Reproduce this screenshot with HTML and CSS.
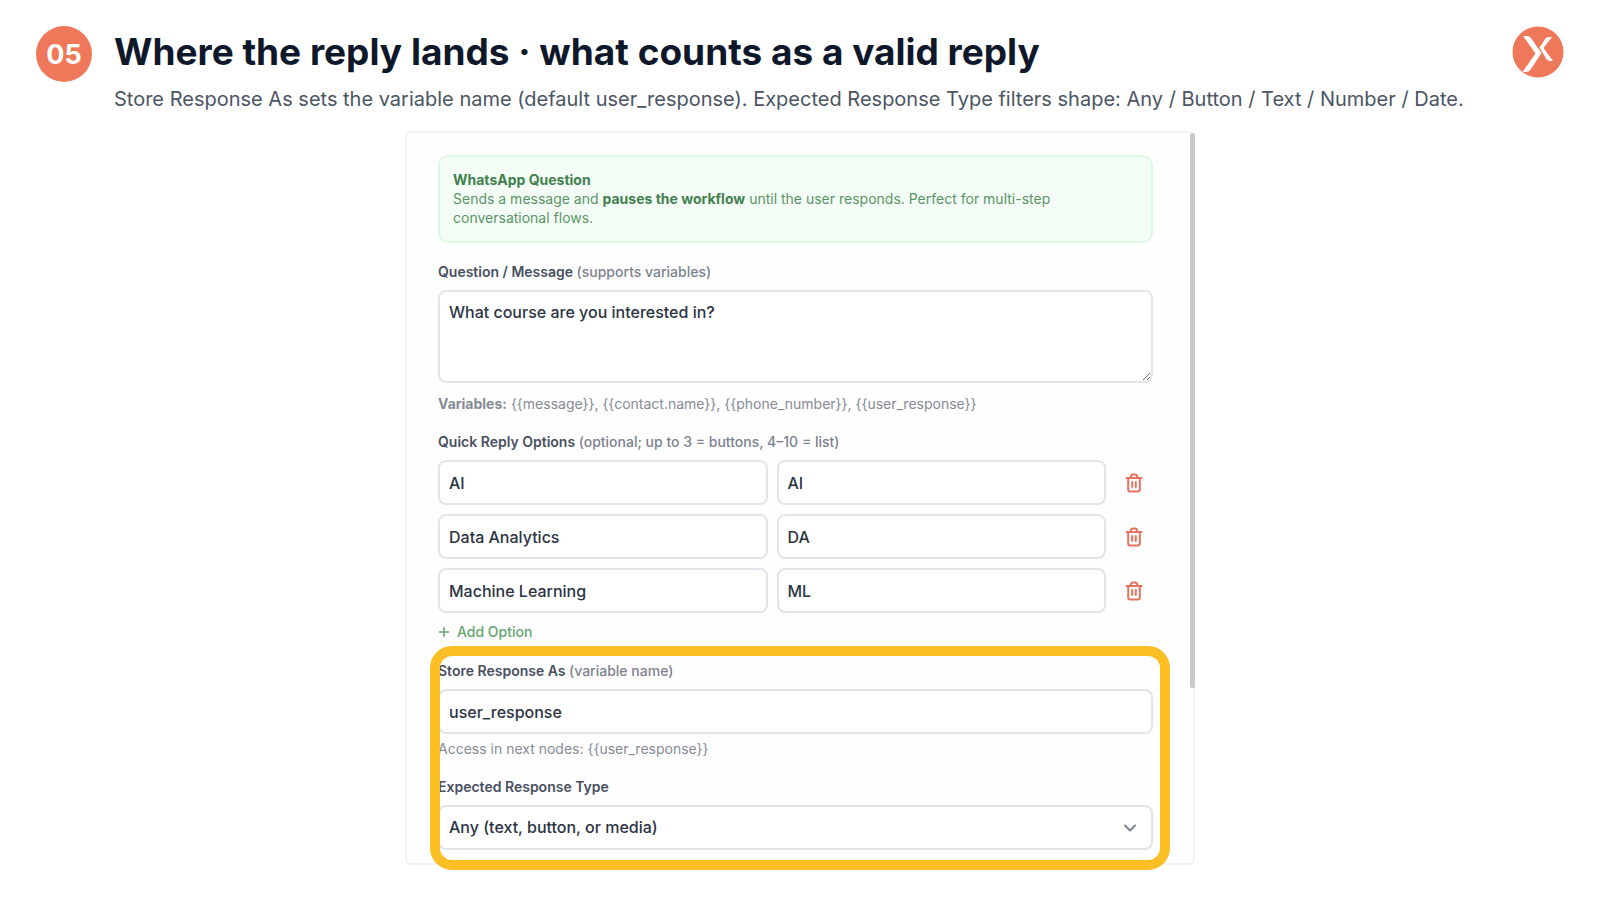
FILE: index.html
```
<!DOCTYPE html>
<html lang="en">
<head>
<meta charset="utf-8">
<title>Where the reply lands</title>
<link rel="stylesheet" href="styles.css">
</head>
<body>
<svg class="sprite" aria-hidden="true">
  <symbol id="trash" viewBox="0 0 18 20">
    <path d="M1.500 5h15M5.500 4.600C5.700 2.800 6.700 1.600 8.200 1.600h1.600c1.500 0 2.500 1.200 2.700 3M3.200 5.200v11.300c0 1.200.8 2 2 2h7.600c1.200 0 2-.8 2-2V5.200M7.200 9v5M10.800 9v5" fill="none" stroke="currentColor" stroke-width="2" stroke-linecap="round" stroke-linejoin="round"/>
  </symbol>
</svg>
<header class="header">
  <div class="step">05</div>
  <div class="heading">
    <h1 class="title">Where the reply lands · what counts as a valid reply</h1>
    <p class="subtitle">Store Response As sets the variable name (default user_response). Expected Response Type filters shape: Any / Button / Text / Number / Date.</p>
  </div>
  <svg class="logo" viewBox="0 0 52 52" role="img" aria-label="Logo">
    <circle cx="26" cy="26" r="25.500" fill="#f0785a"/>
    <path d="M11 10h4.500q2 0 3.200 1.800L29.500 27 19 43q-1.700 3-4.500 3H10.500L23.500 27.500Z" fill="#fff"/>
    <path d="M40 11h-3.500q-2 0-3.200 1.800L27.500 21.500 33.500 31.500q2 3.500 4.500 3.500H41L31.500 22Z" fill="#fff"/>
  </svg>
</header>
<main class="panel">
  <div class="scroll-thumb"></div>
  <form class="form">
    <div class="callout">
      <strong class="callout-title">WhatsApp Question</strong>
      <p class="callout-text">Sends a message and <strong>pauses the workflow</strong> until the user responds. Perfect for multi-step conversational flows.</p>
    </div>
    <div class="field">
      <label class="label" for="question">Question / Message <span class="note">(supports variables)</span></label>
      <textarea class="control area" id="question">What course are you interested in?</textarea>
      <p class="hint hint-area"><strong>Variables:</strong> {{message}}, {{contact.name}}, {{phone_number}}, {{user_response}}</p>
    </div>
    <fieldset class="field options">
      <legend class="label">Quick Reply Options <span class="note">(optional; up to 3 = buttons, 4–10 = list)</span></legend>
      <div class="option">
        <input class="control" type="text" value="AI" aria-label="Option 1 title">
        <input class="control" type="text" value="AI" aria-label="Option 1 value">
        <button class="remove" type="button" aria-label="Remove option 1"><svg class="trash"><use href="#trash"/></svg></button>
      </div>
      <div class="option">
        <input class="control" type="text" value="Data Analytics" aria-label="Option 2 title">
        <input class="control" type="text" value="DA" aria-label="Option 2 value">
        <button class="remove" type="button" aria-label="Remove option 2"><svg class="trash"><use href="#trash"/></svg></button>
      </div>
      <div class="option">
        <input class="control" type="text" value="Machine Learning" aria-label="Option 3 title">
        <input class="control" type="text" value="ML" aria-label="Option 3 value">
        <button class="remove" type="button" aria-label="Remove option 3"><svg class="trash"><use href="#trash"/></svg></button>
      </div>
      <button class="add" type="button"><svg class="plus" viewBox="0 0 12 12"><path d="M6 1.500v9M1.500 6h9" fill="none" stroke="currentColor" stroke-width="1.500" stroke-linecap="round"/></svg>Add Option</button>
    </fieldset>
    <section class="highlighted">
      <div class="field">
        <label class="label" for="variable">Store Response As <span class="note">(variable name)</span></label>
        <input class="control" id="variable" type="text" value="user_response">
        <p class="hint">Access in next nodes: {{user_response}}</p>
      </div>
      <div class="field">
        <label class="label" for="type">Expected Response Type</label>
        <div class="select">
          <select class="control" id="type"><option>Any (text, button, or media)</option></select>
          <svg class="chevron" viewBox="0 0 14 14"><path d="M2 4.500l5 5 5-5" fill="none" stroke="currentColor" stroke-width="2" stroke-linecap="round" stroke-linejoin="round"/></svg>
        </div>
      </div>
    </section>
  </form>
</main>
</body>
</html>
```
FILE: styles.css
```
* { box-sizing: border-box; }
body {
  min-height: 100vh;
  margin: 0;
  background: #fff;
  color: #2b3342;
  font: 14px/19px Inter, "Liberation Sans", sans-serif;
}
p, h1 { margin: 0; }
button, input, select, textarea { font: inherit; color: inherit; }
.sprite { display: none; }

.header {
  display: flex;
  align-items: flex-start;
  gap: 22px;
  padding: 26px 36px 17px;
}
.step {
  display: grid;
  place-items: center;
  flex: none;
  width: 56px;
  height: 56px;
  border-radius: 50%;
  background: #f0785a;
  color: #fff;
  font-size: 27px;
  font-weight: 700;
}
.heading { flex: 1; }
.title {
  color: #0f172a;
  font-size: 37px;
  line-height: 52px;
  font-weight: 700;
}
.subtitle {
  margin-top: 6px;
  color: #4b5563;
  font-size: 20px;
  line-height: 30px;
  white-space: nowrap;
}
.logo { flex: none; width: 52px; height: 52px; }

.panel {
  position: relative;
  max-width: 790px;
  margin: 0 auto;
  padding: 22px 40px 13px 31px;
  border: 2px solid #f1f2f4;
  border-radius: 6px;
  background: #fefefe;
}
.scroll-thumb {
  position: absolute;
  top: 0;
  right: -2px;
  width: 5px;
  height: 76%;
  border-radius: 2px;
  background: #c8c9cc;
}
.form { display: flex; flex-direction: column; gap: 19px; }
.callout {
  padding: 13px 13px 14px;
  border: 2px solid #dcf7e4;
  border-radius: 10px;
  background: #f3fdf6;
  color: #5a9566;
}
.callout strong { color: #43804f; font-weight: 700; }
.callout-title { display: block; }

.field { display: flex; flex-direction: column; }
.label { margin-bottom: 9px; padding: 0; color: #485060; font-weight: 600; }
.note { color: #7c828e; font-weight: 500; }
.hint { margin-top: 5px; color: #868b96; }
.hint-area { margin-top: 11px; }
.control {
  width: 100%;
  min-width: 0;
  height: 45px;
  padding: 0 9px;
  border: 2px solid #e3e4ea;
  border-radius: 8px;
  background: #fff;
  font-size: 16px;
  font-weight: 500;
}
.area { height: 93px; padding-top: 11px; resize: vertical; }

.options { min-width: 0; margin: 0; padding: 0; border: 0; }
.option {
  display: grid;
  grid-template-columns: 1fr 1fr 38px;
  gap: 9px;
  margin-bottom: 9px;
}
.remove, .add {
  display: flex;
  align-items: center;
  padding: 0;
  border: 0;
  background: none;
}
.remove { justify-content: center; color: #e5735f; }
.trash { width: 18px; height: 20px; }
.add {
  align-self: flex-start;
  gap: 7px;
  color: #62a56c;
  line-height: 20px;
  font-weight: 500;
}
.plus { width: 12px; height: 12px; }

.highlighted {
  position: relative;
  display: flex;
  flex-direction: column;
  gap: 19px;
}
.highlighted::after {
  content: "";
  position: absolute;
  inset: -15px -17px -20px -8px;
  border: 10px solid #fbbf24;
  border-radius: 22px;
  pointer-events: none;
}
.select { position: relative; }
.select .control { display: block; appearance: none; }
.chevron {
  position: absolute;
  top: 16px;
  right: 16px;
  width: 14px;
  height: 14px;
  color: #7d8490;
  pointer-events: none;
}
```
